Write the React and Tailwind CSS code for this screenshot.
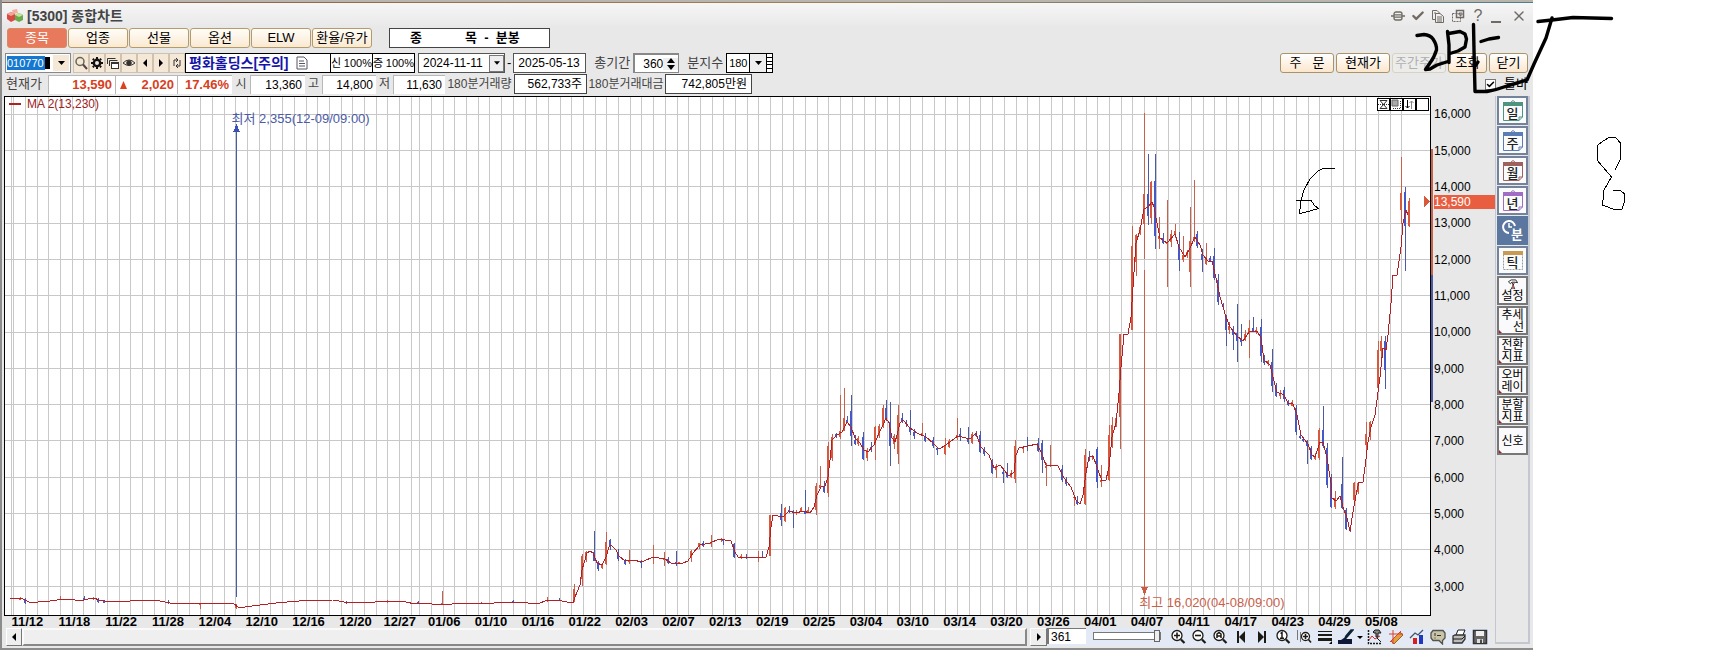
import React from 'react';
import { Check, X } from 'lucide-react';

const FONT = "font-['Liberation_Sans','Noto_Sans_CJK_KR',sans-serif]";

const tabs = ['종목', '업종', '선물', '옵션', 'ELW', '환율/유가'];

const prices = ['16,000', '15,000', '14,000', '13,000', '12,000', '11,000', '10,000', '9,000', '8,000', '7,000', '6,000', '5,000', '4,000', '3,000'];

const dates = [
    '11/12', '11/18', '11/22', '11/28', '12/04', '12/10', '12/16', '12/20', '12/27', '01/06',
    '01/10', '01/16', '01/22', '02/03', '02/07', '02/13', '02/19', '02/25', '03/04', '03/10',
    '03/14', '03/20', '03/26', '04/01', '04/07', '04/11', '04/17', '04/23', '04/29', '05/08',
];

const gridY = [114, 150, 186, 223, 259, 295, 332, 368, 404, 440, 477, 513, 549, 586];
const gridX = [11];
for (let i = 0; i < 35; i++) gridX.push(Math.round(13.3 + i * 11.69));
for (let i = 84; i >= 0; i--) gridX.push(Math.round(1401.3 - i * 11.69));

// moving average
const maLine =
    '10,598 21,598 25,600 31,603 38,602 50,601 57,600 67,599 75,600 80,601 88,599 94,598 99,600 105,601 119,602 130,601 143,600 155,600 165,602 170,603 199,604 214,603 230,603 234,604 238,607 245,607 260,605 276,603 299,601 333,600 344,602 364,603 375,602 388,601 406,602 415,604 421,603 432,604 452,604 459,603 494,603 513,602 528,603 540,603 545,601 557,600 567,602 573,603 ' +
    '575,597 580,585 582,570 587,553 590,551 593,553 597,563 602,565 606,557 609,547 611,545 616,550 619,556 625,561 633,560 642,562 653,557 665,559 671,563 683,563 688,561 693,553 700,545 710,543 719,539 731,541 735,552 738,557 753,558 766,557 769,547 771,527 773,515 783,517 789,511 796,513 803,511 810,513 814,507 817,495 821,487 825,486 828,477 830,460 832,440 837,435 842,432 847,422 851,427 855,438 860,443 864,450 868,452 874,445 879,433 883,425 886,418 889,423 892,438 895,442 897,435 900,423 903,420 910,428 917,433 926,437 933,443 939,449 946,445 958,436 970,439 976,433 981,447 989,455 994,468 1000,465 1009,476 1014,472 1016,455 1019,448 1028,446 1037,444 1041,452 1046,465 1058,466 1064,478 1071,487 1076,500 1080,504 ' +
    '1083,495 1086,473 1089,457 1093,456 1097,467 1102,481 1106,480 1109,467 1112,437 1116,423 1119,393 1121,367 1124,334 1128,334 1131,317 1133,287 1136,243 1140,230 1144,209 1148,207 1152,202 1154,207 1157,223 1160,238 1167,243 1175,234 1179,247 1185,257 1190,248 1195,237 1200,245 1203,255 1208,261 1212,261 1216,278 1220,297 1226,317 1230,327 1237,336 1243,341 1249,332 1257,331 1261,338 1264,360 1270,365 1275,385 1277,392 1284,395 1288,403 1293,404 1297,415 1301,435 1308,444 1312,455 1315,457 1320,442 1323,442 1327,458 1331,483 1332,498 1336,501 1340,496 1343,507 1347,518 1350,531 1353,512 1357,490 1359,482 1363,482 1365,467 1368,442 1371,427 1375,415 1378,392 1380,377 1383,348 1386,350 1388,335 1391,303 1393,275 1397,275 1401,247 1403,223 1406,210 1408,215';

// [x, high, low, body top, body bottom]
const upCandles = [
    [20, 597, 600, 598, 600], [60, 596, 600, 599, 600], [93, 597, 600, 598, 599], [200, 603, 609, 603, 605], [236, 604, 609, 606, 608],
    [387, 600, 603, 601, 602], [442, 591, 604, 603, 604], [547, 597, 602, 600, 601], [574, 584, 602, 589, 602], [582, 554, 586, 556, 579],
    [586, 551, 562, 552, 558], [602, 564, 569, 565, 568], [606, 532, 565, 542, 564], [629, 550, 564, 560, 562], [653, 545, 564, 557, 558],
    [664, 552, 566, 559, 560], [679, 562, 563, 562, 563], [691, 550, 562, 551, 558], [699, 543, 549, 543, 547], [711, 535, 547, 543, 544],
    [721, 538, 542, 539, 540], [741, 554, 559, 556, 558], [758, 551, 562, 557, 558], [770, 515, 556, 515, 556], [785, 507, 522, 508, 521],
    [796, 510, 515, 512, 513], [801, 507, 512, 508, 511], [808, 507, 513, 510, 512], [816, 483, 515, 486, 510], [820, 466, 489, 485, 488],
    [828, 442, 497, 446, 493], [832, 434, 461, 437, 458], [840, 395, 439, 431, 437], [844, 388, 431, 418, 431], [858, 436, 446, 438, 444],
    [867, 448, 461, 450, 458], [875, 426, 460, 427, 442], [879, 424, 438, 426, 436], [883, 405, 428, 408, 426], [894, 434, 449, 436, 444],
    [898, 405, 464, 415, 454], [922, 423, 435, 433, 435], [945, 438, 455, 445, 454], [949, 439, 448, 441, 447], [957, 418, 440, 435, 438],
    [972, 432, 444, 434, 443], [996, 464, 478, 466, 470], [1011, 470, 478, 473, 477], [1015, 440, 483, 446, 479], [1023, 446, 453, 448, 449],
    [1050, 445, 467, 465, 466], [1046, 463, 486, 466, 468], [1074, 496, 506, 497, 498], [1085, 449, 505, 455, 504],
    [1092, 455, 460, 456, 457], [1101, 465, 487, 480, 482], [1109, 425, 481, 435, 480], [1112, 417, 448, 425, 446], [1116, 417, 427, 418, 426],
    [1120, 334, 449, 334, 417], [1132, 226, 330, 246, 330], [1136, 234, 276, 235, 262], [1140, 226, 235, 227, 234], [1144, 113, 259, 194, 224],
    [1151, 181, 224, 182, 218], [1159, 217, 249, 236, 239], [1167, 200, 287, 242, 244], [1171, 230, 247, 234, 242], [1175, 224, 238, 231, 235],
    [1183, 236, 262, 255, 260], [1187, 250, 258, 252, 256], [1190, 207, 287, 241, 272], [1194, 180, 242, 237, 241], [1206, 243, 265, 258, 264],
    [1229, 322, 334, 326, 330], [1245, 330, 341, 334, 339], [1249, 320, 358, 328, 332], [1256, 327, 334, 330, 332], [1268, 360, 366, 361, 364],
    [1280, 390, 399, 393, 396], [1292, 400, 406, 402, 406], [1315, 453, 460, 456, 459], [1319, 428, 460, 430, 458], [1335, 491, 509, 498, 507],
    [1354, 482, 505, 483, 500], [1358, 482, 494, 483, 492], [1366, 422, 453, 434, 445], [1370, 421, 440, 422, 437], [1378, 341, 391, 350, 388],
    [1381, 336, 363, 341, 351], [1401, 157, 224, 193, 210], [1409, 198, 227, 201, 226],
];

const downCandles = [
    [25, 598, 604, 600, 603], [84, 596, 600, 598, 600], [98, 598, 603, 599, 602], [104, 600, 603, 601, 603], [168, 600, 604, 602, 603],
    [346, 601, 604, 602, 603], [418, 601, 604, 602, 603], [481, 602, 604, 603, 604], [513, 600, 602, 601, 602], [559, 598, 601, 600, 601],
    [594, 531, 561, 552, 561], [598, 561, 571, 562, 569], [610, 539, 550, 540, 546], [618, 549, 561, 553, 559], [625, 559, 565, 560, 564],
    [641, 560, 568, 562, 563], [668, 557, 564, 559, 563], [676, 551, 566, 562, 564], [703, 541, 547, 543, 546], [723, 539, 545, 540, 541],
    [734, 543, 558, 544, 557], [746, 554, 559, 557, 558], [762, 551, 558, 557, 558], [781, 504, 526, 513, 520], [789, 506, 513, 510, 511],
    [793, 510, 528, 511, 513], [805, 490, 514, 512, 514], [824, 481, 493, 486, 492], [836, 433, 438, 434, 436], [847, 416, 423, 420, 423],
    [851, 395, 446, 411, 436], [855, 435, 445, 440, 444], [863, 432, 460, 437, 459], [871, 442, 452, 447, 448], [886, 400, 421, 408, 420],
    [890, 402, 466, 422, 446], [902, 413, 423, 418, 422], [906, 420, 427, 422, 424], [910, 410, 435, 427, 432], [914, 429, 439, 432, 436],
    [925, 433, 442, 436, 441], [933, 437, 448, 440, 446], [937, 447, 455, 448, 450], [960, 428, 441, 434, 436], [968, 427, 444, 438, 442],
    [976, 431, 437, 433, 436], [980, 431, 453, 435, 452], [984, 447, 456, 449, 454], [992, 459, 474, 460, 473], [1003, 470, 483, 472, 474],
    [1007, 463, 478, 474, 477], [1027, 437, 451, 446, 447], [1038, 438, 452, 443, 451], [1042, 440, 473, 443, 460], [1062, 465, 482, 469, 480],
    [1066, 477, 486, 480, 484], [1077, 496, 505, 500, 504], [1089, 451, 461, 457, 458], [1097, 447, 488, 449, 482], [1148, 154, 225, 194, 216],
    [1155, 154, 249, 181, 236], [1163, 233, 244, 238, 243], [1179, 232, 271, 247, 260], [1197, 231, 248, 234, 246], [1202, 249, 272, 254, 260],
    [1210, 256, 262, 258, 261], [1214, 248, 280, 256, 278], [1218, 274, 305, 280, 302], [1223, 303, 309, 304, 307], [1226, 315, 346, 317, 330],
    [1233, 326, 350, 329, 335], [1237, 304, 362, 333, 341], [1241, 324, 346, 339, 342], [1253, 317, 332, 328, 331], [1261, 319, 362, 327, 356],
    [1264, 355, 365, 358, 363], [1272, 349, 392, 362, 386], [1276, 383, 397, 385, 396], [1284, 387, 402, 390, 399], [1288, 400, 406, 402, 405],
    [1296, 405, 435, 408, 432], [1300, 432, 439, 436, 438], [1303, 437, 442, 439, 441], [1307, 440, 464, 443, 446], [1311, 446, 460, 448, 459],
    [1323, 406, 448, 430, 446], [1327, 443, 488, 448, 485], [1331, 474, 508, 482, 507], [1342, 457, 509, 484, 508], [1346, 508, 530, 510, 529],
    [1350, 527, 532, 529, 531], [1385, 336, 389, 341, 370], [1405, 187, 271, 192, 226],
];

const Candles = ({ data, wick, body }) =>
    data.map(([x, hi, lo, top, bottom], i) => (
        <g key={i}>
            <rect x={x} y={hi} width="1" height={lo - hi} fill={wick} />
            <rect x={x - 1} y={top} width="2" height={bottom - top} fill={body} />
        </g>
    ));

const Chart = () => (
    <div className="relative min-w-0 flex-1 overflow-hidden border border-black bg-white">
        <svg className="absolute inset-0 h-full w-full" viewBox="5 97 1425 518" preserveAspectRatio="none" shapeRendering="crispEdges">
            {gridX.map((x) => <rect key={x} x={x} y="97" width="1" height="518" fill="#c8c8c8" />)}
            {gridY.map((y) => <rect key={y} x="5" y={y} width="1425" height="1" fill="#c8c8c8" />)}
            <Candles data={upCandles} wick="#c9604a" body="#d9583c" />
            <Candles data={downCandles} wick="#4a5aa5" body="#4458c8" />
            <polyline points={maLine} fill="none" stroke="#b02025" strokeWidth="1" />
            {/* low / high markers */}
            <rect x="236" y="130" width="1" height="467" fill="#4a5aa5" />
            <path d="M236.500 124L240 132H233Z" fill="#3a50b5" />
            <rect x="1144" y="270" width="1" height="320" fill="#c9604a" />
            <path d="M1141 587H1148L1144.500 595Z" fill="#cf5a44" />
            <path d="M1424 195L1430 201.500L1424 208Z" fill="#d9583c" />
        </svg>
        <div className="absolute left-1 top-0 flex items-center gap-[6px] text-[12px] leading-[14px] text-[#a02020]">
            <span className="h-[2px] w-3 bg-[#b02020]" />
            <span>MA 2(13,230)</span>
        </div>
        <span className="absolute left-[15.9%] top-[15px] text-[13px] leading-[14px] text-[#4a5aa5]">최저 2,355(12-09/09:00)</span>
        <span className="absolute bottom-[5px] left-[79.6%] text-[13px] leading-[14px] text-[#c9604a]">최고 16,020(04-08/09:00)</span>
        <div className="absolute right-[1px] top-[1px] flex">
            <button aria-label="축소" className="h-[13px] w-[13px] border border-black bg-white">
                <svg viewBox="0 0 11 11" className="h-full w-full" fill="none" stroke="#333"><path d="M2 1.500H9L2 9.500H9L2 1.500" /><path d="M0 5.500H11" strokeDasharray="1 1" /></svg>
            </button>
            <button aria-label="영역" className="h-[13px] w-[13px] border border-black bg-white">
                <svg viewBox="0 0 11 11" className="h-full w-full"><path d="M1 1H7V7H1Z" fill="#aaa" stroke="#666" /><path d="M9.500 2V10M2 9.500H10" stroke="#333" strokeDasharray="1 1" /></svg>
            </button>
            <button aria-label="정렬" className="h-[13px] w-[13px] border border-black bg-white">
                <svg viewBox="0 0 11 11" className="h-full w-full" fill="none"><path d="M3.500 1V9M1.500 7L3.500 9L5.500 7" stroke="#000" /><path d="M7.500 10V2M5.500 4L7.500 2L9.500 4" stroke="#888" /></svg>
            </button>
            <button aria-label="빈 칸" className="h-[13px] w-[13px] border border-black bg-white" />
        </div>
    </div>
);

const PriceAxis = () => (
    <div className="relative flex w-16 shrink-0 flex-col pb-[11px] pl-[3px]">
        <div className="absolute left-0 top-[10.2%] h-[24.3%] w-[2px] bg-[#c9604a]" />
        <div className="absolute left-0 top-[34.5%] h-[24.3%] w-[2px] bg-[#4a5aa5]" />
        {prices.map((p) => (
            <div key={p} className="flex flex-1 items-center text-[12px] leading-[14px] text-black">{p}</div>
        ))}
        <div className="absolute left-[3px] right-0 top-[19%] bg-[#e95d40] text-[12px] leading-[14px] text-white">13,590</div>
    </div>
);

const Tab = ({ label, active }) => (
    <button className={`flex h-5 w-[60px] items-center justify-center whitespace-nowrap rounded-[3px] border text-[13px] leading-[16px] ${active ? 'border-[#d98a63] bg-[#e8795c] text-white' : 'border-[#b59b68] bg-gradient-to-b from-[#fffdf8] to-[#fae9d2] text-black'}`}>
        {label}
    </button>
);

const ActionButton = ({ children, className, disabled }) => (
    <button disabled={disabled} className={`flex h-5 items-center justify-center whitespace-pre rounded-[3px] border text-[13px] leading-[16px] ${disabled ? 'border-[#d8d2c4] bg-[#ececea] text-[#b0b0b0]' : 'border-[#a89468] bg-gradient-to-b from-white to-[#fbe6cd] text-black'} ${className}`}>
        {children}
    </button>
);

const IconButton = ({ label, children }) => (
    <button aria-label={label} className="flex h-5 w-4 items-center justify-center border border-[#cfc3b0] bg-[#f6e8d6]">
        <svg viewBox="0 0 14 14" className="h-[14px] w-[14px] shrink-0" fill="none" stroke="#333">{children}</svg>
    </button>
);

const TitleBar = () => (
    <header className="flex h-[25px] items-center justify-between bg-gradient-to-b from-[#f6f6f6] to-[#e8e8e8] pl-[5px] pr-[6px]">
        <div className="flex items-center gap-1">
            <svg viewBox="0 0 16 14" className="h-[14px] w-4">
                <path d="M5 1L10 0L11 4L6 5Z" fill="#f0b0a0" />
                <path d="M0 5L4 3L8 5V11L4 13L0 10Z" fill="#d84a44" />
                <path d="M0 5L4 3L8 5L4 7Z" fill="#f4a49a" />
                <path d="M8 6L12 4L16 6V11L12 13L8 11Z" fill="#6aaa4c" />
                <path d="M8 6L12 4L16 6L12 8Z" fill="#c4e39a" />
            </svg>
            <h1 className="text-[14px] font-bold leading-[16px] text-[#444]">[5300] 종합차트</h1>
        </div>
        <div className="flex items-center gap-[6px] text-[#6f6a64]">
            <button aria-label="연결"><svg viewBox="0 0 14 12" className="h-3 w-[14px]" fill="none" stroke="currentColor" strokeWidth="1.300"><rect x="3" y="2" width="8" height="8" rx="2" /><path d="M0 6H3M11 6H14M3 4.800H11M3 7.200H11" /></svg></button>
            <button aria-label="고정"><Check size={14} strokeWidth={4} /></button>
            <button aria-label="복사"><svg viewBox="0 0 14 14" className="h-[14px] w-[14px]" fill="none" stroke="currentColor"><path d="M4.500 10.500H1.500V1.500H6L8.500 4" /><path d="M4.500 4.500H9L12.500 7.500V13.500H4.500ZM6 8H11M6 10H11M6 12H11M3 4H5" /></svg></button>
            <button aria-label="창 분리"><svg viewBox="0 0 14 14" className="h-[14px] w-[14px]" fill="none" stroke="currentColor"><rect x="1.500" y="4.500" width="8" height="8" strokeDasharray="2 1" /><rect x="5.500" y="1.500" width="7" height="7" strokeWidth="1.500" /><path d="M8 4H11V6H8Z" /></svg></button>
            <button aria-label="도움말" className="w-[14px] text-[16px] leading-[18px]">?</button>
            <button aria-label="최소화" className="flex h-[14px] w-[14px] items-end"><span className="h-[2px] w-[10px] bg-current" /></button>
            <button aria-label="창 닫기"><X size={16} strokeWidth={2} /></button>
        </div>
    </header>
);

const SearchRow = () => (
    <div className="flex h-5 items-center pl-[3px] pr-[5px] text-[13px] leading-[16px]">
        <div className="flex h-5 border border-[#888] bg-white p-px">
            <input aria-label="종목코드" defaultValue="010770" className="h-[14px] w-[38px] self-center bg-[#1478d0] text-[11px] leading-[14px] text-white outline-none" />
            <span className="mr-[3px] h-3 w-[5px] self-center bg-black" />
            <button aria-label="종목 선택" className="flex w-[16px] items-center justify-center bg-[#f6e8d6]">
                <svg viewBox="0 0 7 4" className="h-1 w-[7px]"><path d="M0 0H7L3.500 4Z" /></svg>
            </button>
        </div>
        <div className="ml-[2px] flex">
            <IconButton label="검색"><circle cx="6" cy="5.500" r="4" stroke="#665" strokeWidth="1.500" /><path d="M9 8.500L13 13" stroke="#544" strokeWidth="2" /></IconButton>
            <IconButton label="설정"><circle cx="7" cy="7" r="3.200" strokeWidth="2.400" stroke="#111" /><path d="M7 1V3M7 11V13M1 7H3M11 7H13M2.800 2.800L4 4M10 10L11.200 11.200M2.800 11.200L4 10M10 4L11.200 2.800" strokeWidth="2" stroke="#111" /></IconButton>
            <IconButton label="창"><path d="M1.500 8V2.500H9.500M3.500 10V4.500H11.500" /><rect x="5.500" y="6.500" width="7" height="6" fill="#fff" /><path d="M5 7H13" strokeWidth="2" /></IconButton>
            <IconButton label="관심"><path d="M1 7Q7 1 13 7Q7 12 1 7Z" /><circle cx="7" cy="7" r="2.300" fill="#333" /></IconButton>
            <IconButton label="이전"><path d="M9 3V11L5 7Z" fill="#000" stroke="none" /></IconButton>
            <IconButton label="다음"><path d="M5 3V11L9 7Z" fill="#000" stroke="none" /></IconButton>
            <IconButton label="새로고침"><path d="M4 10V4H8M6 2L8 4L6 6M10 4V10H6M8 8L6 10L8 12" /></IconButton>
        </div>
        <div className="flex h-5 items-center border border-black bg-white">
            <div className="flex w-[144px] items-center gap-2 pl-[3px]">
                <strong className="whitespace-nowrap text-[14px] text-[#1414a8]">평화홀딩스[주의]</strong>
                <svg viewBox="0 0 12 14" className="h-[14px] w-3 shrink-0" fill="#fff" stroke="#556"><path d="M1 1H8L11 4V13H1ZM3 5H8M3 7.500H9M3 10H9" /></svg>
            </div>
            <span className="flex h-full w-[42px] items-center justify-between whitespace-nowrap border-l border-black text-[11px]">신 <span>100%</span></span>
            <span className="flex h-full w-[42px] items-center justify-between whitespace-nowrap border-l border-black text-[11px]">증 <span>100%</span></span>
        </div>
        <div className="ml-[3px] flex h-5 w-[87px] items-center border border-[#555] bg-white">
            <input aria-label="시작일" defaultValue="2024-11-11" className="w-[70px] pl-1 text-[12px] leading-[16px] outline-none" />
            <button aria-label="시작일 선택" className="flex h-[17px] w-[15px] items-center justify-center border border-[#777] bg-[#eee]">
                <svg viewBox="0 0 7 4" className="h-1 w-[6px]"><path d="M0 0H7L3.500 4Z" /></svg>
            </button>
        </div>
        <span className="px-[2px]">-</span>
        <input aria-label="종료일" defaultValue="2025-05-13" className="h-5 w-[73px] border border-[#555] bg-white pl-1 text-[12px] leading-[16px] outline-none" />
        <label htmlFor="period" className="ml-2 text-[#444]">총기간</label>
        <div className="ml-[3px] flex h-5 w-[46px] items-center border-2 border-b border-r border-[#888] bg-white">
            <input id="period" defaultValue="360" className="w-[28px] text-right text-[12px] leading-[16px] outline-none" />
            <span className="flex flex-1 flex-col items-center gap-[2px] bg-[#eee]">
                <button aria-label="증가"><svg viewBox="0 0 8 5" className="h-[5px] w-2"><path d="M0 5H8L4 0Z" /></svg></button>
                <button aria-label="감소"><svg viewBox="0 0 8 5" className="h-[5px] w-2"><path d="M0 0H8L4 5Z" /></svg></button>
            </span>
        </div>
        <label htmlFor="minutes" className="ml-2 text-[#444]">분지수</label>
        <div className="relative ml-[3px] flex h-5 border border-black">
            <select id="minutes" className="h-full w-[39px] appearance-none bg-white pl-[2px] text-[11px] leading-[16px] outline-none">
                <option>180</option>
            </select>
            <span className="pointer-events-none absolute left-[22px] flex h-full w-[17px] items-center justify-center border-l border-black bg-[#eee]">
                <svg viewBox="0 0 7 4" className="h-1 w-[7px]"><path d="M0 0H7L3.500 4Z" /></svg>
            </span>
            <span className="flex h-full w-[6px] flex-col justify-evenly border-l border-black bg-white">
                <i className="h-px bg-black" /><i className="h-px bg-black" /><i className="h-px bg-black" /><i className="h-px bg-black" />
            </span>
        </div>
        <div className="ml-auto flex gap-[2px]">
            <ActionButton className="w-[54px]">주   문</ActionButton>
            <ActionButton className="w-[54px]">현재가</ActionButton>
            <ActionButton disabled className="w-[54px]">주간주가</ActionButton>
            <ActionButton className="w-[39px]">조회</ActionButton>
            <ActionButton className="w-[39px]">닫기</ActionButton>
        </div>
    </div>
);

const Cell = ({ children, className }) => (
    <span className={`flex h-[19px] items-center justify-end border-l border-t border-[#b8b8b8] bg-white pr-[3px] leading-[16px] ${className}`}>{children}</span>
);

const QuoteRow = () => (
    <div className="flex h-5 items-center whitespace-nowrap pl-1 pr-[5px] text-[12px] leading-[16px] text-[#444]">
        <span className="w-[42px] text-[13px]">현재가</span>
        <Cell className="w-[67px] text-[13px] font-bold text-[#d8401c]">13,590</Cell>
        <Cell className="w-[62px] text-[13px] font-bold text-[#d8401c]">
            <svg viewBox="0 0 7 8" className="mr-auto ml-1 h-2 w-[7px]" fill="#e04020"><path d="M3.500 0L7 8H0Z" /></svg>
            2,020
        </Cell>
        <Cell className="w-[55px] text-[13px] font-bold text-[#d8401c]">17.46%</Cell>
        <span className="w-[18px] text-center">시</span>
        <Cell className="w-[55px] text-black">13,360</Cell>
        <span className="w-[17px] text-center">고</span>
        <Cell className="w-[54px] text-black">14,800</Cell>
        <span className="w-[17px] text-center">저</span>
        <Cell className="w-[52px] text-black">11,630</Cell>
        <span className="w-[69px] text-center">180분거래량</span>
        <span className="flex h-5 w-[73px] items-center justify-end border border-[#444] bg-white pr-1 text-black">562,733주</span>
        <span className="w-[78px] text-center">180분거래대금</span>
        <span className="flex h-5 w-[87px] items-center justify-end border border-[#444] bg-white pr-1 text-black">742,805만원</span>
        <label className="ml-auto flex items-center gap-2 text-[13px] text-black">
            <input type="checkbox" defaultChecked className="peer sr-only" />
            <span className="flex h-[11px] w-[11px] items-center justify-center border border-[#777] bg-white"><Check size={9} strokeWidth={4} /></span>
            툴바
        </label>
    </div>
);

const CalendarButton = ({ label, color }) => (
    <button className="relative flex h-[29px] items-center justify-center border-2 border-[#74839b] bg-[#fafbfc]">
        <svg viewBox="0 0 22 21" className="absolute h-[21px] w-[22px]" fill="none" stroke={color}>
            <path d="M8.500 2.500L11 0.500L13.500 2.500" />
            <path d="M1.500 3V20.500H17L20.500 17V3" />
            <path d="M1 2H21V6H1Z" fill={color} stroke="none" />
            <path d="M17 20.500V17H20.500" />
        </svg>
        <span className="relative pt-[5px] text-[13px] font-medium leading-[13px] text-[#222]">{label}</span>
    </button>
);

const ToolButton = ({ lines, corner = true, children }) => (
    <button className="relative flex h-[29px] flex-col items-center justify-center border-2 border-[#777] bg-[#fafafc] text-[12px] leading-[12px] text-black">
        {children}
        {lines.map((l) => <span key={l} className={l === '선' ? 'self-end pr-[2px]' : ''}>{l}</span>)}
        {corner && <svg viewBox="0 0 3 3" className="absolute bottom-0 left-0 h-[3px] w-[3px]" fill="#a02020"><path d="M0 0L3 3H0Z" /></svg>}
    </button>
);

const SideToolbar = () => (
    <aside className="flex w-[38px] shrink-0 flex-col pb-1 pr-[3px]">
        <div className="flex flex-1 flex-col gap-px border-b-2 border-l border-r-2 border-[#c3c7cf] pl-px">
            <CalendarButton label="일" color="#4f947e" />
            <CalendarButton label="주" color="#5a7db5" />
            <CalendarButton label="월" color="#a0605c" />
            <CalendarButton label="년" color="#a06cc4" />
            <button className="relative flex h-[29px] items-end justify-end bg-[#5b769f] pb-[4px] pr-[5px] text-[13px] font-bold leading-[13px] text-white">
                <svg viewBox="0 0 16 16" className="absolute left-1 top-[3px] h-4 w-4" fill="none" stroke="#fff" strokeWidth="2"><path d="M8 14A6 6 0 1 1 14 7" /><path d="M8 4V8H11" strokeWidth="1.500" /></svg>
                분
            </button>
            <button className="relative flex h-[29px] items-center justify-center border-2 border-[#74839b] bg-[#fafbfc]">
                <svg viewBox="0 0 22 21" className="absolute h-[21px] w-[22px]" fill="none"><path d="M1.500 1.500H20.500V19.500H1.500Z" stroke="#999" strokeDasharray="2 1" /><path d="M1 1H21V5H1Z" fill="#c89a54" /></svg>
                <span className="relative pt-[4px] text-[13px] font-medium leading-[13px] text-[#222]">틱</span>
            </button>
            <ToolButton lines={['설정']} corner={false}>
                <svg viewBox="0 0 12 12" className="h-[11px] w-3" fill="none" stroke="#222"><path d="M1 3L4 1H9L11 4L8 3.500H5L3 5ZM5 4L8 11M7.500 4L4 11" /><path d="M5 7H7V11H5Z" fill="#b06050" stroke="none" /></svg>
            </ToolButton>
            <ToolButton lines={['추세', '선']} />
            <ToolButton lines={['전환', '지표']} />
            <ToolButton lines={['오버', '레이']} />
            <ToolButton lines={['분할', '지표']} />
            <ToolButton lines={['신호']} />
        </div>
    </aside>
);

const BarIcon = ({ label, children }) => (
    <button aria-label={label} className="flex h-full w-[21px] items-center justify-center">
        <svg viewBox="0 0 16 16" className="h-4 w-4 shrink-0" fill="none" stroke="#1c1a14">{children}</svg>
    </button>
);

const Lens = () => (
    <>
        <circle cx="7" cy="6.500" r="5" fill="#fff" strokeWidth="1.300" />
        <path d="M11 10.500L14.500 14" strokeWidth="2.200" />
    </>
);

const BottomBar = () => (
    <div className="flex h-[18px] items-stretch pr-[5px]">
        <div className="flex min-w-0 flex-1 pl-[2px]">
            <button aria-label="왼쪽" className="flex w-4 items-center justify-center border border-white border-b-[#777] border-r-[#777] bg-[#eee]">
                <svg viewBox="0 0 4 8" className="h-2 w-1"><path d="M4 0V8L0 4Z" /></svg>
            </button>
            <div className="flex-1 border-2 border-[#fafafa] border-b-[#888] border-r-[#888] bg-[#efefef]" />
            <button aria-label="오른쪽" className="ml-[3px] flex w-[17px] items-center justify-center border border-white border-b-[#777] border-r-[#777] bg-[#eee]">
                <svg viewBox="0 0 4 8" className="h-2 w-1"><path d="M0 0V8L4 4Z" /></svg>
            </button>
        </div>
        <div className="flex bg-[#e3eaf5]">
            <input aria-label="봉 개수" defaultValue="361" className="h-4 w-[39px] border-l-2 border-t border-[#777] bg-white pl-[2px] text-[12px] leading-[14px] outline-none" />
            <input
                type="range"
                aria-label="간격"
                defaultValue="100"
                className="ml-[7px] mr-[6px] mt-[2px] h-3 w-[68px] appearance-none bg-transparent [&::-webkit-slider-runnable-track]:h-2 [&::-webkit-slider-runnable-track]:border [&::-webkit-slider-runnable-track]:border-[#777] [&::-webkit-slider-runnable-track]:bg-white [&::-webkit-slider-thumb]:-mt-[3px] [&::-webkit-slider-thumb]:h-3 [&::-webkit-slider-thumb]:w-[6px] [&::-webkit-slider-thumb]:appearance-none [&::-webkit-slider-thumb]:border [&::-webkit-slider-thumb]:border-[#666] [&::-webkit-slider-thumb]:bg-[#eee]"
            />
            <BarIcon label="확대"><Lens /><path d="M4 6.500H10M7 3.500V9.500" strokeWidth="1.600" /></BarIcon>
            <BarIcon label="축소"><Lens /><path d="M4 6.500H10" strokeWidth="1.600" /></BarIcon>
            <BarIcon label="전체"><Lens /><path d="M5 9V5L7 3.500L9 5V9M5 7H9" strokeWidth="1.500" /></BarIcon>
            <BarIcon label="처음"><path d="M5 2V14" strokeWidth="2" /><path d="M12 2V14L6 8Z" fill="#1c1a14" stroke="none" /></BarIcon>
            <BarIcon label="마지막"><path d="M11 2V14" strokeWidth="2" /><path d="M4 2V14L10 8Z" fill="#1c1a14" stroke="none" /></BarIcon>
            <BarIcon label="원래대로"><Lens /><path d="M5.500 4.500L7 3.500V9M5 9.300H9" strokeWidth="1.500" /></BarIcon>
            <BarIcon label="구간 확대"><path d="M1.500 1V11M4.500 3V13" stroke="#777" /><circle cx="9.500" cy="7.500" r="4" fill="#fff" strokeWidth="1.300" /><path d="M7 7.500H12M9.500 5V10M12.500 10.500L15 13.500" strokeWidth="1.600" /></BarIcon>
            <BarIcon label="선 굵기"><path d="M1 2.500H15" /><path d="M1 6H15" strokeWidth="2" /><path d="M1 10.500H15" strokeWidth="3" /><path d="M15 12V15H12Z" fill="#000" stroke="none" /></BarIcon>
            <BarIcon label="선 색"><path d="M15 1L9 8L6 11L8 7L13 1Z" fill="#3a60b0" stroke="#123" strokeWidth="1.500" /><path d="M0 11H3L6 9L9 10H14V15H0Z" fill="#101838" stroke="none" /></BarIcon>
            <button aria-label="선 색 선택" className="flex w-2 items-center justify-center"><svg viewBox="0 0 6 3" className="h-[3px] w-[6px]"><path d="M0 0H6L3 3Z" /></svg></button>
            <BarIcon label="차트 설정"><path d="M1.500 1V14.500H14" strokeDasharray="2 1" strokeWidth="1.500" /><path d="M2 11L5 7L8 10L13 7" stroke="#d03030" /><path d="M6 3L8 1H12L14 4H11V8H9V4H7Z" fill="#888" /><path d="M10 9L14 13" /></BarIcon>
            <BarIcon label="자"><path d="M3 12L12 3L15 6L6 15Z" fill="#e0a040" stroke="#a06020" /><path d="M5 1V15M1 5H15M2 13L13 2" stroke="#d84030" /></BarIcon>
            <BarIcon label="지표"><path d="M4 9H8V15H4Z" fill="#d02020" stroke="none" /><path d="M10 6H14V15H10Z" fill="#2038c0" stroke="none" /><path d="M1 9L6 4L9 6L14 1" stroke="#456" strokeWidth="1.300" /></BarIcon>
            <BarIcon label="메모"><path d="M3 1.500H13L15 4V9L12.500 11.500V15L9 11.500H3L1 9V4Z" fill="#c9c3a8" stroke="#55534a" strokeWidth="1.300" /><path d="M5 4V7M5 8.500V9.500M7 6.500H11" stroke="#333" /></BarIcon>
            <BarIcon label="인쇄"><path d="M5 6L7 1H14L12 6" fill="#fff" /><path d="M2 7L4 6H14V10L11 14H2Z" fill="#bbb" stroke="#333" strokeWidth="1.300" /><path d="M2 10H11L14 7" /></BarIcon>
            <BarIcon label="저장"><path d="M1.500 1.500H14.500V14.500H1.500Z" fill="#666" stroke="#333" strokeWidth="1.500" /><path d="M4 2H12V7H4Z" fill="#eee" stroke="none" /><path d="M5 10H11V14H5Z" fill="#ddd" stroke="none" /><path d="M9 10.500V14" strokeWidth="1.500" /></BarIcon>
        </div>
    </div>
);

// freehand pen notes drawn over the window
const PenNotes = () => (
    <svg viewBox="1285 0 450 230" className="pointer-events-none absolute right-0 top-0 h-[230px] w-[450px]" fill="none" stroke="#000" strokeLinecap="round" strokeLinejoin="round">
        <g strokeWidth="3.400">
            <path d="M1417 35.500L1424 34.500Q1430 35 1433 39Q1437 45 1436.500 50Q1434 58 1430 63L1425.500 69.500L1430 69L1437 65L1448 61.500" />
            <path d="M1447.500 31.500L1449 45L1449 62.500M1448.500 33.500L1460 31.500L1465 34L1466.500 39L1465 47L1458 51L1450 53.500" />
            <path d="M1473.500 24.500L1474 50L1475 91.500L1487 91.500Q1496 90 1507 86L1527 80L1534 64L1546 38L1552 18" />
            <path d="M1475 66L1478 62M1481 41.500L1489 39L1498.500 37.500" />
            <path d="M1538 21.500L1552 20L1573 17.500L1611.500 18.500" />
        </g>
        <g strokeWidth="1" shapeRendering="crispEdges">
            <path d="M1334.500 168.500H1323L1318 171L1310 179L1304 190L1301 200L1299.500 213.500L1308 211.500L1318.500 208.500L1314 205L1311 200L1295.500 200" />
            <path d="M1615.500 169L1620.500 159V143L1616 138L1610 137L1603 141L1598 145L1597 160L1611.500 177L1604 190L1602.500 205L1613 209H1622L1624.500 202V194L1621 191L1613.500 190.500" />
        </g>
    </svg>
);

const App = () => {
    return (
        <div className={`relative flex h-screen w-full bg-white text-black ${FONT}`}>
            <div className="flex min-w-0 flex-1 flex-col border-b-2 border-l-2 border-[#8c8c8c] bg-[#e8e8e8]">
                <div className="h-[2px] shrink-0 bg-[#b9b5ae]" />
                <div className="h-px shrink-0 bg-gradient-to-r from-[#8a5a48] via-[#a08050] to-[#4f7f88]" />
                <TitleBar />
                <div className="flex h-5 items-center pl-[5px]">
                    <nav className="flex gap-px">
                        {tabs.map((t, i) => <Tab key={t} label={t} active={i === 0} />)}
                    </nav>
                    <div className="ml-[17px] flex h-5 w-[161px] items-center whitespace-pre border border-[#444] bg-white pl-5 text-[13px] font-bold leading-[16px]">
                        <span className="mr-[43px]">종</span>
                        <span>목  -  분봉</span>
                    </div>
                </div>
                <div className="flex shrink-0 flex-col gap-px pb-[2px] pt-[5px]">
                    <SearchRow />
                    <QuoteRow />
                </div>
                <div className="flex min-h-0 flex-1">
                    <main className="flex min-w-0 flex-1 flex-col pb-[2px] pl-[2px]">
                        <div className="flex min-h-0 flex-1">
                            <Chart />
                            <PriceAxis />
                        </div>
                        <div className="flex h-3 items-center pr-[90px] text-[13px] font-bold leading-[12px]">
                            {dates.map((d) => (
                                <span key={d} className={`min-w-0 text-center ${d === '12/27' ? 'flex-[42]' : 'flex-[47]'}`}>{d}</span>
                            ))}
                        </div>
                        <BottomBar />
                    </main>
                    <SideToolbar />
                </div>
            </div>
            <div className="w-[202px] shrink-0" />
            <PenNotes />
        </div>
    );
};

export default App;
